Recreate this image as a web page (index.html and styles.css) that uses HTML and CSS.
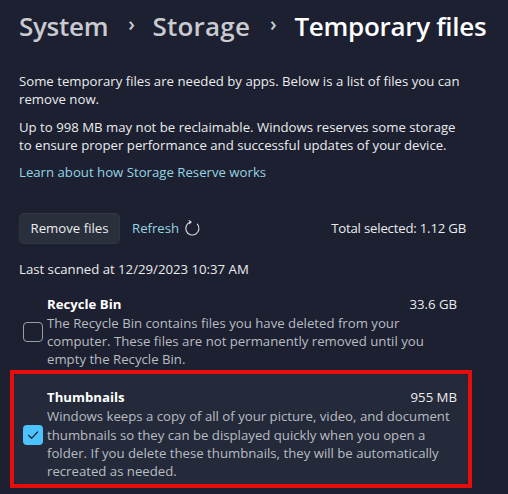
FILE: index.html
```html
<!DOCTYPE html>
<html>
<head>
<meta charset="utf-8">
<link rel="stylesheet" href="styles.css">
</head>
<body>
<main class="page">
  <h1 class="crumbs">
    <span class="crumb">System</span>
    <span class="chev">›</span>
    <span class="crumb storage">Storage</span>
    <span class="chev">›</span>
    <span class="crumb current">Temporary files</span>
  </h1>
  <p class="para">Some temporary files are needed by apps. Below is a list of files you can remove now.</p>
  <p class="para">Up to 998 MB may not be reclaimable. Windows reserves some storage to ensure proper performance and successful updates of your device.</p>
  <a class="link">Learn about how Storage Reserve works</a>
  <div class="actions">
    <button class="btn">Remove files</button>
    <span class="refresh">Refresh
      <svg class="refresh-icon" viewBox="0 0 16 16" width="17" height="17"><path d="M6.4 1.9 A6.2 6.2 0 1 0 12.6 3.9" fill="none" stroke="currentColor" stroke-width="1.1" stroke-linecap="round"/><path d="M4.8 0.6 L6.6 1.9 L5.0 3.4" fill="none" stroke="currentColor" stroke-width="1.1" stroke-linecap="round" stroke-linejoin="round"/></svg>
    </span>
    <span class="total">Total selected: 1.12 GB</span>
  </div>
  <div class="scanned">Last scanned at 12/29/2023 10:37 AM</div>
  <div class="items">
    <div class="item first">
      <span class="check"></span>
      <div class="item-body">
        <div class="item-head"><span class="item-title">Recycle Bin</span><span class="item-size">33.6 GB</span></div>
        <div class="item-desc">The Recycle Bin contains files you have deleted from your computer. These files are not permanently removed until you empty the Recycle Bin.</div>
      </div>
    </div>
    <div class="highlight">
      <div class="item selected">
        <span class="check on"><svg viewBox="0 0 20 20" width="20" height="20"><path d="M5.5 10.3 L8.6 13.3 L14.6 7" fill="none" stroke="#1a2130" stroke-width="1.2" stroke-linecap="round" stroke-linejoin="round"/></svg></span>
        <div class="item-body">
          <div class="item-head"><span class="item-title">Thumbnails</span><span class="item-size">955 MB</span></div>
          <div class="item-desc">Windows keeps a copy of all of your picture, video, and document thumbnails so they can be displayed quickly when you open a folder. If you delete these thumbnails, they will be automatically recreated as needed.</div>
        </div>
      </div>
    </div>
  </div>
</main>
</body>
</html>
```
FILE: styles.css
```css
html, body {
  margin: 0;
  padding: 0;
  background: #1c2030;
  height: 100%;
  overflow: hidden;
}
body {
  font-family: "Open Sans", "Noto Sans", sans-serif;
  color: #ebecee;
}
.page {
  padding: 6px 0 0 19px;
}
.crumbs {
  margin: 0;
  font-size: 26px;
  font-weight: 600;
  line-height: 40px;
  display: flex;
  align-items: center;
  letter-spacing: -0.3px;
  white-space: nowrap;
}
.crumb { color: #c9cbd1; }
.crumb.storage { letter-spacing: 0.2px; }
.crumb.current { color: #ffffff; }
.chev {
  color: #c9cbd1;
  font-size: 20px;
  font-weight: 600;
  margin: 0 18px 0 20px;
  position: relative;
  top: -2px;
}
.para {
  margin: 27px 0 0 0;
  font-size: 13.2px;
  line-height: 17.5px;
  width: 446px;
}
.para + .para { margin-top: 11px; }
.link {
  display: block;
  margin-top: 10px;
  font-size: 13.2px;
  line-height: 17.5px;
  color: #96d4e3;
}
.actions {
  margin-top: 31px;
  display: flex;
  align-items: center;
  font-size: 13.2px;
  width: 447px;
}
.btn {
  font-family: inherit;
  font-size: 13.2px;
  color: #ebecee;
  background: #2a2f3c;
  border: 1px solid #303543;
  border-top-color: #353a48;
  border-radius: 5px;
  width: 101px;
  height: 31px;
  padding: 0;
}
.refresh {
  margin-left: 12px;
  color: #96d4e3;
  display: flex;
  align-items: center;
  gap: 5px;
}
.refresh-icon { color: #d8dbe0; }
.total {
  margin-left: auto;
  letter-spacing: -0.2px;
}
.scanned {
  margin-top: 16px;
  font-size: 13.2px;
  line-height: 18px;
}
.items {
  margin: 10px 0 0 -9px;
  width: 462px;
}
.item {
  display: flex;
  align-items: center;
  padding: 7px 15px 0 13px;
}
.check {
  flex: none;
  width: 18px;
  height: 18px;
  border: 1px solid #9a9ea6;
  border-radius: 4px;
  margin-right: 4px;
  margin-top: 2px;
}
.check.on {
  width: 20px;
  height: 20px;
  border: none;
  background: #4cc2ff;
  display: flex;
}
.item-body { flex: 1; }
.item-head {
  display: flex;
  justify-content: space-between;
  font-size: 13.2px;
  line-height: 18px;
}
.item-title { font-weight: 700; color: #fff; }
.item-desc {
  font-size: 13.2px;
  line-height: 18.3px;
  color: #b9bcc3;
  margin-top: 1px;
  padding-right: 2px;
}
.highlight {
  margin-top: 2px;
  border: 4px solid #e50d0d;
}
.item.selected {
  background: #242a39;
  border-radius: 4px;
  padding: 14px 11px 3px 9px;
}
```
